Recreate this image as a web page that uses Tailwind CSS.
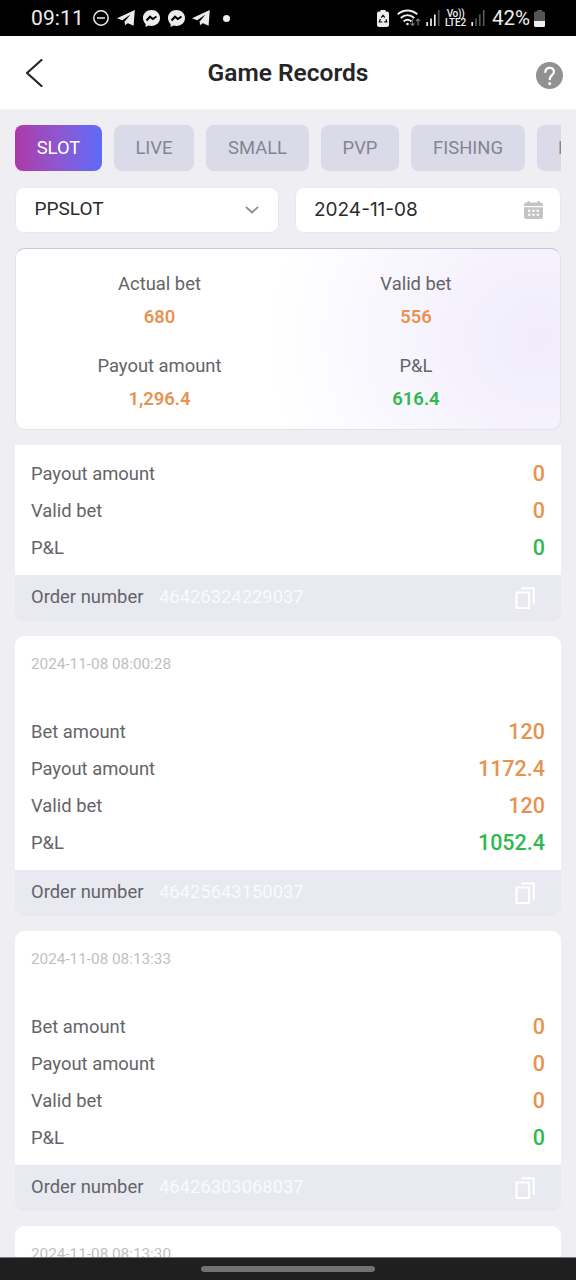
<!DOCTYPE html>
<html lang="en">
<head>
<meta charset="utf-8">
<title>Game Records</title>
<script src="https://cdn.jsdelivr.net/npm/@tailwindcss/browser@4"></script>
</head>
<body class="w-[576px] h-[1280px] overflow-hidden bg-[#efeef3] font-['Roboto',sans-serif] flex flex-col text-[#646468]">
<svg class="hidden">
  <symbol id="copy" viewBox="0 0 22 24"><path d="M2.500 6.500h12.500v15.500H2.500z" fill="none" stroke="#fff" stroke-width="2.200"/><path d="M7.500 2.400h12.200v16.200" fill="none" stroke="#fff" stroke-width="2.200"/></symbol>
  <symbol id="plane" viewBox="0 0 18 16"><path fill="#ededed" d="M0 8.200 17.800 0 16.600 15.800 7.600 11.800 13.500 4.600 5.200 10.200z"/><path fill="#ededed" d="m7.600 11 3.400 2-3 2.200z"/></symbol>
  <symbol id="chat" viewBox="0 0 17 17"><path fill="#ededed" d="M8.500 0C3.700 0 0 3.400 0 8c0 2.400 1 4.400 2.600 5.900V17l2.800-1.500c1 .3 2 .4 3.100.4 4.800 0 8.500-3.400 8.500-7.900S13.300 0 8.500 0z"/><path d="M3.500 10.500 7 6.700l2.800 2.400 3.700-2.600" fill="none" stroke="#000" stroke-width="2"/></symbol>
</svg>

<header class="h-9 shrink-0 bg-black text-[#ededed] flex items-center justify-between pl-[31px] pr-[31px]">
  <div class="flex items-center">
    <span class="text-[21px] leading-none w-[62px] tracking-[0.1px]">09:11</span>
    <svg class="w-4 h-4" viewBox="0 0 16 16" fill="none" stroke="#ededed" stroke-width="1.500"><circle cx="8" cy="8" r="7.200"/><path d="M4 8h8"/></svg>
    <svg class="ml-2 w-[18px] h-4"><use href="#plane"/></svg>
    <svg class="ml-2 w-[17px] h-[17px]"><use href="#chat"/></svg>
    <svg class="ml-2 w-[17px] h-[17px]"><use href="#chat"/></svg>
    <svg class="ml-[7px] w-[18px] h-4"><use href="#plane"/></svg>
    <span class="ml-[13px] size-[7px] rounded-full bg-[#ededed]"></span>
  </div>
  <div class="flex items-center">
    <svg class="w-[12px] h-[17px]" viewBox="0 0 12 17"><path fill="#ededed" d="M3.500 0h5v1.500H10a2 2 0 0 1 2 2V15a2 2 0 0 1-2 2H2a2 2 0 0 1-2-2V3.500a2 2 0 0 1 2-2h1.500z"/><path d="m4.200 7.600 1.800-2.400 1.800 2.400M9 9.200l.8 2.600H7.200M5.400 12H2.300L3.400 9" fill="none" stroke="#111" stroke-width="1.200"/></svg>
    <svg class="ml-[8px] w-[24px] h-[18px]" viewBox="0 0 24 18" fill="none" stroke="#ededed" stroke-width="1.900"><path d="M.7 5.300C6.500.2 14.500.2 20.300 5.300M3.700 9c4.200-3.600 9.400-3.600 13.600 0M6.600 12.400c2.400-2 5.400-2 7.800 0"/><circle cx="10.500" cy="15" r="1.300" fill="#ededed" stroke="none"/><path d="M15.500 10v6.500m-2-2 2 2 2-2M21 16.500V10m-2 2 2-2 2 2" stroke="#777" stroke-width="1.200"/></svg>
    <svg class="ml-[5px] w-[14px] h-[16px]" viewBox="0 0 14 16"><path d="M1.200 12v4M5 8.500V16M8.800 4.500V16" stroke="#ededed" stroke-width="1.700"/><path d="M12.700 0v16" stroke="#555" stroke-width="1.700"/></svg>
    <div class="ml-[4px] w-[23px] flex flex-col items-center text-[10px] leading-[9px] font-medium"><span class="tracking-[-0.300px]">Vo))</span><span class="tracking-[-0.200px]">LTE2</span></div>
    <svg class="ml-[4px] w-[14px] h-[16px]" viewBox="0 0 14 16"><path d="M1.200 12v4" stroke="#ededed" stroke-width="1.700"/><path d="M5 8.500V16M8.800 4.500V16M12.700 0v16" stroke="#555" stroke-width="1.700"/></svg>
    <span class="ml-[7px] w-[42px] text-[20.500px] leading-none whitespace-nowrap">42%</span>
    <svg class="w-[11px] h-[17px]" viewBox="0 0 11 17"><path fill="#555" d="M3 0h5v1.500h1.500A1.500 1.500 0 0 1 11 3v8H0V3a1.500 1.500 0 0 1 1.500-1.500H3z"/><path fill="#f0f0f0" d="M0 11h11v4.500A1.500 1.500 0 0 1 9.500 17h-8A1.500 1.500 0 0 1 0 15.500z"/></svg>
  </div>
</header>

<nav class="h-[74px] shrink-0 bg-white border-b border-[#f4f4f6] flex items-center justify-between pl-[25px] pr-[13px]">
  <svg class="w-[19px] h-7" viewBox="0 0 19 28" fill="none" stroke="#252525" stroke-width="2.200" stroke-linecap="round" stroke-linejoin="round"><path d="M16.500 1 2 14l14.500 13"/></svg>
  <h1 class="mr-[4px] pt-[2px] text-[24.500px] leading-none font-semibold text-[#252528]">Game Records</h1>
  <svg class="mt-[5px] w-[27px] h-[27px]" viewBox="0 0 27 27"><circle cx="13.500" cy="13.500" r="13.500" fill="#919191"/><path d="M9.300 10c.2-2.700 1.900-4.200 4.300-4.200 2.500 0 4.300 1.500 4.300 3.900 0 3.300-4.100 3.600-4.100 7.500" fill="none" stroke="#fff" stroke-width="2.200" stroke-linecap="round"/><circle cx="13.700" cy="21.600" r="1.600" fill="#fff"/></svg>
</nav>

<main class="flex-1 min-h-0 px-[15px] flex flex-col">
  <div class="mt-[15px] h-[46px] shrink-0 flex gap-3 overflow-hidden text-[18.400px] text-[#85858f]">
    <div class="w-[87px] shrink-0 rounded-lg flex items-center justify-center bg-linear-to-r from-[#ad37a9] to-[#5d6af9] text-white">SLOT</div>
    <div class="w-[80px] shrink-0 rounded-lg flex items-center justify-center bg-[#dbdae9]">LIVE</div>
    <div class="w-[103px] shrink-0 rounded-lg flex items-center justify-center bg-[#dbdae9]">SMALL</div>
    <div class="w-[78px] shrink-0 rounded-lg flex items-center justify-center bg-[#dbdae9]">PVP</div>
    <div class="w-[114px] shrink-0 rounded-lg flex items-center justify-center bg-[#dbdae9]">FISHING</div>
    <div class="w-[100px] shrink-0 rounded-lg flex items-center bg-[#dbdae9] pl-[21px]">L</div>
  </div>

  <div class="mt-4 h-[46px] shrink-0 flex gap-4 text-[#2b2b2e]">
    <div class="w-[264px] bg-white border border-[#e9e8ee] rounded-[9px] flex items-center justify-between pl-[18.500px] pr-[19px]">
      <span class="text-[19px] pb-px">PPSLOT</span>
      <svg class="w-[14px] h-2" viewBox="0 0 14 8" fill="none" stroke="#8d8d8d" stroke-width="1.700"><path d="m1 1 6 5.500L13 1"/></svg>
    </div>
    <div class="flex-1 bg-white border border-[#e9e8ee] rounded-[9px] flex items-center justify-between pl-[18px] pr-[17px]">
      <span class="text-[19px] font-['Inter',sans-serif]">2024-11-08</span>
      <svg class="w-[19px] h-[18px]" viewBox="0 0 19 18"><path fill="#c4c4c6" d="M2 1.500h1.500V0h2v1.500h8V0h2v1.500H17a2 2 0 0 1 2 2V5H0V3.500a2 2 0 0 1 2-2zM0 6.300h19V16a2 2 0 0 1-2 2H2a2 2 0 0 1-2-2z"/><path fill="#fff" d="M4 8.800h2.400v2H4zM8.300 8.800h2.400v2H8.300zM12.600 8.800H15v2h-2.400zM4 12.800h2.400v2H4zM8.300 12.800h2.400v2H8.300zM12.600 12.800H15v2h-2.400z"/></svg>
    </div>
  </div>

  <section class="mt-[15px] h-[182px] shrink-0 rounded-[10px] border border-[#e4e3ea] border-t-[#c9c8ce] bg-white bg-[radial-gradient(ellipse_270px_250px_at_96%_50%,#f0ecfc_0%,#f5f2fd_35%,#fff_100%)] grid grid-cols-[287px_1fr] pr-[31px] pt-[24px] grid-rows-[82px_82px] text-center text-[18.400px] leading-[22px]">
    <div><p>Actual bet</p><p class="mt-[11px] font-semibold text-[#e79350]">680</p></div>
    <div><p>Valid bet</p><p class="mt-[11px] font-semibold text-[#e79350]">556</p></div>
    <div><p>Payout amount</p><p class="mt-[11px] font-semibold text-[#e79350]">1,296.4</p></div>
    <div><p>P&amp;L</p><p class="mt-[11px] font-semibold text-[#2eb94f]">616.4</p></div>
  </section>

  <div id="records" class="mt-[15px] flex-1 min-h-0 overflow-hidden flex flex-col gap-[15px]"></div>
</main>

<footer class="h-[23px] shrink-0 bg-[#1f1f1f] border-t border-[#777a78] flex justify-center pt-[8px]"><span class="w-[174px] h-[6px] rounded-full bg-[#727272]"></span></footer>

<script>
const records = [
  { rows: [['Payout amount', '0'], ['Valid bet', '0'], ['P&amp;L', '0']], order: '46426324229037' },
  { date: '2024-11-08 08:00:28', rows: [['Bet amount', '120'], ['Payout amount', '1172.4'], ['Valid bet', '120'], ['P&amp;L', '1052.4']], order: '46425643150037' },
  { date: '2024-11-08 08:13:33', rows: [['Bet amount', '0'], ['Payout amount', '0'], ['Valid bet', '0'], ['P&amp;L', '0']], order: '46426303068037' },
  { date: '2024-11-08 08:13:30', rows: [] }
];
document.getElementById('records').innerHTML = records.map(r => `
  <article class="shrink-0 overflow-hidden ${r.date ? 'rounded-[9px]' : 'rounded-b-[9px]'}">
    <div class="bg-white px-4 ${r.date ? 'pb-2' : 'pt-[11px] pb-2'}">
      ${r.date ? `<p class="h-[78px] pt-[18px] text-[15.300px] leading-[20px] text-[#bfbfc1]">${r.date}</p>` : ''}
      ${r.rows.map(([k, v]) => `<div class="h-[37px] flex items-center justify-between"><span class="text-[18.400px] pb-px">${k}</span><span class="text-[21.500px] font-medium ${k === 'P&amp;L' ? 'text-[#2eb94f]' : 'text-[#e79350]'}">${v}</span></div>`).join('')}
    </div>
    ${r.order ? `<div class="h-[46px] bg-[#e8e9f1] pl-4 pr-[25px] flex items-center text-[18.400px]"><span class="w-[128px] pb-[2px]">Order number</span><span class="text-[#fafaff] pb-[2px]">${r.order}</span><svg class="ml-auto w-[22px] h-6"><use href="#copy"/></svg></div>` : ''}
  </article>`).join('');
</script>
</body>
</html>
